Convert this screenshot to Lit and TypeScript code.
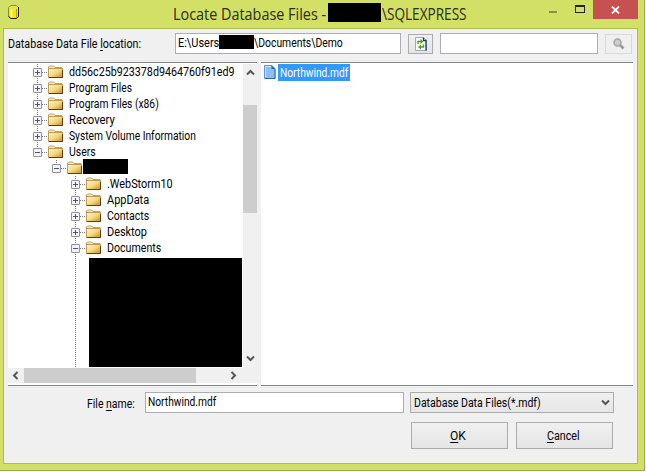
import { LitElement, html, css, svg } from "lit";
import { customElement, property } from "lit/decorators.js";

type Row = { name: string; level: number; open: boolean; w: number; end?: boolean };

const ROWS: Row[] = [
  { name: "dd56c25b923378d9464760f91ed9", level: 0, open: false, w: 166 },
  { name: "Program Files", level: 0, open: false, w: 63 },
  { name: "Program Files (x86)", level: 0, open: false, w: 90 },
  { name: "Recovery", level: 0, open: false, w: 46 },
  { name: "System Volume Information", level: 0, open: false, w: 127 },
  { name: "Users", level: 0, open: true, w: 27, end: true },
  { name: "", level: 1, open: true, w: 45, end: true },
  { name: ".WebStorm10", level: 2, open: false, w: 66 },
  { name: "AppData", level: 2, open: false, w: 42 },
  { name: "Contacts", level: 2, open: false, w: 42 },
  { name: "Desktop", level: 2, open: false, w: 40 },
  { name: "Documents", level: 2, open: true, w: 54 },
];

/* Condenses its text horizontally so that it fills the width it is given. */
@customElement("fit-text")
class FitText extends LitElement {
  @property({ type: Number }) w = 0;
  static styles = css`
    :host { display: block; flex: none; white-space: pre; }
    .t { display: inline-block; transform-origin: 0 0; }
  `;
  firstUpdated() {
    const t = this.renderRoot.querySelector(".t") as HTMLElement;
    this.style.width = this.w + "px";
    t.style.transform = `scaleX(${this.w / t.offsetWidth})`;
  }
  render() {
    return html`<span class="t"><slot></slot></span>`;
  }
}

@customElement("tree-row")
class TreeRow extends LitElement {
  @property({ attribute: false }) row!: Row;
  static styles = css`
    :host { display: flex; height: 16px; align-items: center; }
    svg { flex: none; display: block; }
    .name { line-height: 16px; margin-left: 5px; }
    .mask { height: 15px; background: #000; align-self: flex-start; margin-top: -1px; }
  `;
  render() {
    const { level, open, name, w, end } = this.row;
    const x = 24 + level * 19;
    return html`
      <svg width=${x + 32} height="16" viewBox="0 0 ${x + 32} 16">
        <defs>
          <linearGradient id="f" x1="0" y1="0" x2="1" y2="1">
            <stop offset="0" stop-color="#fff6cc" /><stop offset=".5" stop-color="#f6d983" /><stop offset="1" stop-color="#d48a0c" />
          </linearGradient>
        </defs>
        <g shape-rendering="crispEdges">
          <path d="M${x + 5.5} 0V${end ? 8 : 16}" stroke="#777" stroke-dasharray="1 1" />
          <path d="M${x + 10} 8.5H${x + 17}" stroke="#777" stroke-dasharray="1 1" />
        </g>
        <rect x=${x + 1.5} y="4.5" width="8" height="8" rx=".5" fill="#f4f4f7" stroke="#919191" />
        <path d="M${x + 3} 8.5h5${open ? "" : "M" + (x + 5.5) + " 6v5"}" stroke="#3a55a5" fill="none" />
        <path d="M${x + 16.5} 12V3l1-1h4l1.500 1.500h7V12z" fill="#f4e7b4" stroke="#b3a47a" />
        <rect x=${x + 16.5} y="4.5" width="14" height="9" fill="url(#f)" stroke="#c39a48" />
        <path d="M${x + 17} 13.500H${x + 30.5}V6" fill="none" stroke="#5c4010" />
      </svg>
      ${name ? html`<fit-text class="name" .w=${w}>${name}</fit-text>` : html`<span class="mask" style="width:${w}px"></span>`}
    `;
  }
}

const chevron = (d: string) =>
  html`<svg width="9" height="9" viewBox="0 0 9 9"><path d=${d} fill="none" stroke="#555" stroke-width="2" /></svg>`;

@customElement("app-root")
class AppRoot extends LitElement {
  static styles = css`
    * { box-sizing: border-box; }
    svg { display: block; flex: none; }
    :host { display: block; width: 646px; height: 472px; background: #f4f6e0; font: 12px/16px Roboto, "Liberation Sans", sans-serif; color: #000; overflow: hidden; }
    .window { width: 645px; height: 471px; background: #d2e066; border-right: 1px solid #9caa46; border-bottom: 1px solid #9caa46; padding: 0 6px 6px 3px; display: flex; flex-direction: column; }
    .title { height: 28px; display: flex; flex: none; }
    .logo { margin: 4px 0 0 5px; }
    .caption { margin-left: 153px; height: 28px; display: flex; font: 16px/28px "Open Sans", sans-serif; color: #2b2b1e; }
    .caption .mask { width: 53px; height: 19px; margin: 3px 1px 0 2px; background: #000; }
    .win { margin-left: auto; display: flex; }
    .min { width: 8px; height: 2px; background: #88904c; margin: 11px 18px 0 0; }
    .max { width: 10px; height: 8px; border: 1px solid #222; border-top-width: 2px; margin: 5px 8px 0 0; }
    .close { width: 45px; height: 19px; background: #c75050; display: flex; align-items: center; justify-content: center; }
    .body { flex: 1; border: 1px solid #aebb55; background: #f0f0f0; padding: 4px 4px 0 4px; display: flex; flex-direction: column; }
    .top { display: flex; height: 29px; align-items: flex-start; }
    .top .lbl { margin-right: 34px; padding-top: 3px; }
    .field { height: 21px; border: 1px solid #abadb3; background: #fff; padding: 0 2px; display: flex; line-height: 19px; }
    .path { width: 226px; margin-right: 7px; }
    .path .mask { width: 35px; height: 14px; background: #000; margin-top: 1px; }
    .btn { border: 1px solid #acacac; background: linear-gradient(#f0f0f0, #e5e5e5); display: flex; align-items: center; justify-content: center; }
    .refresh { width: 25px; height: 20px; margin: 1px 7px 0 0; }
    .search { width: 158px; margin-right: 7px; }
    .find { width: 27px; height: 20px; margin-top: 1px; border-color: #d9d9d9; background: #efefef; }
    .panes { display: flex; gap: 4px; height: 324px; }
    .tree { width: 249px; border: solid #828790; border-width: 1px 0; background: #fff; padding: 1px 0 2px; display: flex; flex-direction: column; }
    .upper { display: flex; height: 304px; }
    .rows { width: 235px; overflow: hidden; }
    .sub { display: flex; height: 112px; }
    .sub svg { width: 81px; }
    .sub .mask { width: 153px; height: 109px; background: #000; margin-top: 2px; }
    .vbar { width: 14px; background: #f0f0f0; display: flex; flex-direction: column; align-items: center; padding: 4px 0 5px; }
    .vbar .thumb { width: 14px; height: 108px; background: #cdcdcd; margin: 28px 0 auto; }
    .hbar { height: 15px; background: #f0f0f0; display: flex; align-items: center; padding: 0 19px 0 3px; }
    .hbar .thumb { height: 15px; width: 172px; background: #cdcdcd; margin: 0 auto 0 4px; }
    .files { flex: 1; border: solid #828790; border-width: 1px 0; background: #fff; padding: 1px 3px; display: flex; align-items: flex-start; }
    .files svg { margin-top: 1px; }
    .files .sel { background: #39f; color: #fff; width: 72px; height: 17px; padding-left: 2px; margin-left: 2px; line-height: 18px; }
    .row { display: flex; margin-top: 6px; padding-left: 79px; height: 21px; }
    .row .lbl { margin-right: 10px; padding-top: 4px; }
    .name { width: 259px; margin-right: 6px; }
    .select { width: 204px; padding: 0 3px; justify-content: space-between; height: 21px; }
    .actions { display: flex; gap: 8px; margin-top: 9px; padding-left: 403px; }
    .actions .btn { width: 97px; height: 27px; padding-right: 3px; }
    u { text-decoration: underline; text-underline-offset: 2px; text-decoration-thickness: 1px; text-decoration-skip-ink: none; }
  `;
  render() {
    return html`
      <div class="window">
        <div class="title">
          <svg class="logo" width="12" height="16" viewBox="0 0 12 16">
            <path d="M.5 3.500L3 1.500h5.500L10.500 3.500V12.500L8 14.500H3.500L.5 12.500z" fill="#f0ea14" stroke="#8b8a35" />
            <path d="M10.500 3V12.500L8.500 14.500H3L.5 12.500" fill="none" stroke="#1c1c10" />
            <path d="M1 4L3 2.500h5L10 4 8 5.500H3z" fill="#e2df70" />
            <path d="M3.500 5.500V13.500" stroke="#ffff5c" stroke-width="2" /><path d="M8.500 5V13.500" stroke="#b0aa00" />
          </svg>
          <div class="caption"><fit-text w="153">Locate Database Files -</fit-text><span class="mask"></span><fit-text w="85">\\SQLEXPRESS</fit-text></div>
          <div class="win">
            <div class="min"></div><div class="max"></div>
            <div class="close"><svg width="9" height="8" viewBox="0 0 9 8"><path d="M1 .5L8 7.500M8 .5L1 7.500" stroke="#fff" stroke-width="1.800" /></svg></div>
          </div>
        </div>
        <div class="body">
          <div class="top">
            <fit-text class="lbl" w="133">Database Data File <u>l</u>ocation:</fit-text>
            <div class="field path"><fit-text w="41">E:\\Users</fit-text><span class="mask"></span><fit-text w="89">\\Documents\\Demo</fit-text></div>
            <div class="btn refresh">
              <svg width="12" height="14" viewBox="0 0 12 14">
                <path d="M.5 .5h8l3 3v10H.5z" fill="#f4f8ff" stroke="#9aaace" /><path d="M8.500 .5v3h3M11 3V13.500" fill="none" stroke="#223860" stroke-width="1.300" />
                <path d="M3 7V4.500h3M8.500 7.500v2.500H6" fill="none" stroke="#5c9a1c" stroke-width="1.400" /><path d="M5.500 2l3 2.500-3 2.500zM6 7.500l-3 2.500 3 2.500z" fill="#5c9a1c" />
              </svg>
            </div>
            <div class="field search"></div>
            <div class="btn find">
              <svg width="12" height="12" viewBox="0 0 12 12"><path d="M6.500 6.500L10.500 10.500" stroke="#999" stroke-width="2.500" /><circle cx="4.500" cy="4.500" r="3.500" fill="#ccc" stroke="#a5a5a5" stroke-width="1.500" /></svg>
            </div>
          </div>
          <div class="panes">
            <div class="tree">
              <div class="upper">
                <div class="rows">
                  ${ROWS.map((r) => html`<tree-row .row=${r}></tree-row>`)}
                  <div class="sub"><svg height="112" shape-rendering="crispEdges"><path d="M67.500 0V112" stroke="#777" stroke-dasharray="1 1" /></svg><div class="mask"></div></div>
                </div>
                <div class="vbar">${chevron("M1 6.500L4.500 3L8 6.500")}<div class="thumb"></div>${chevron("M1 2.500L4.500 6L8 2.500")}</div>
              </div>
              <div class="hbar">${chevron("M6.500 1L3 4.500L6.500 8")}<div class="thumb"></div>${chevron("M2.500 1L6 4.500L2.500 8")}</div>
            </div>
            <div class="files">
              <svg width="12" height="15" viewBox="0 0 12 15"><path d="M.5 .5h7.500l3 3v10H.5z" fill="#8cc0f4" stroke="#5b96d6" /><path d="M1.500 12V1.500H7" fill="none" stroke="#c8e4ff" /><path d="M7.500 .5v3.500h3.500z" fill="#1d5fae" /><path d="M11 4v9.500H1" fill="none" stroke="#2a66b0" /></svg>
              <div class="sel"><fit-text w="68">Northwind.mdf</fit-text></div>
            </div>
          </div>
          <div class="row">
            <fit-text class="lbl" w="48">File <u>n</u>ame:</fit-text>
            <div class="field name"><fit-text w="68">Northwind.mdf</fit-text></div>
            <div class="btn select"><fit-text w="127">Database Data Files(*.mdf)</fit-text>${chevron("M1 2.500L4.500 6L8 2.500")}</div>
          </div>
          <div class="actions"><div class="btn"><fit-text w="16"><u>O</u>K</fit-text></div><div class="btn"><fit-text w="33"><u>C</u>ancel</fit-text></div></div>
        </div>
      </div>
    `;
  }
}
